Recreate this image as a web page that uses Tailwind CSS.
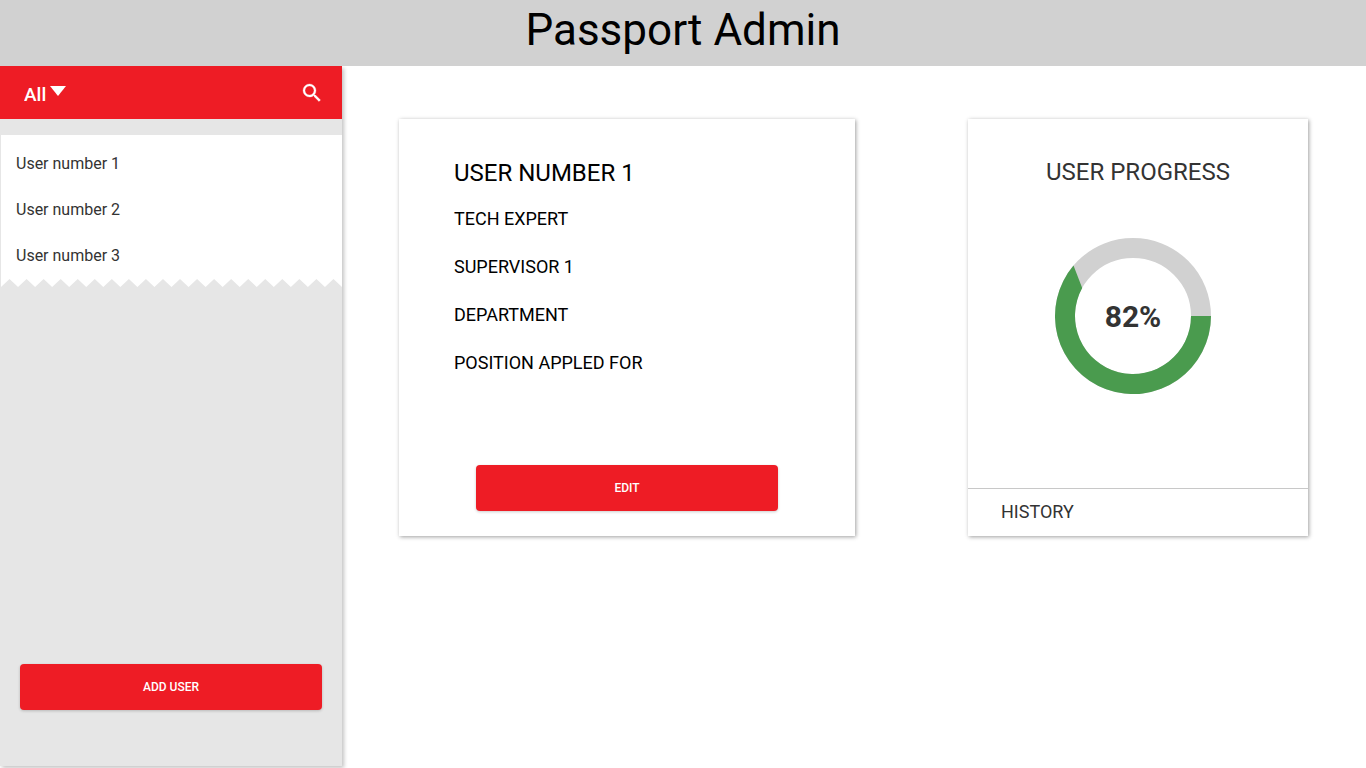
<!DOCTYPE html>
<html lang="en">
<head>
<meta charset="utf-8">
<meta name="viewport" content="width=device-width, initial-scale=1">
<title>Passport Admin</title>
<script src="https://cdn.jsdelivr.net/npm/@tailwindcss/browser@4"></script>
</head>
<body class="flex min-h-screen flex-col bg-white font-['Roboto',sans-serif] text-[#333333]">
  <header class="relative z-10 bg-[#d1d1d1] pt-1 pb-2.5 text-center text-black">
    <h1 class="text-[44px] leading-[52px]">Passport Admin</h1>
  </header>
  <div class="flex flex-1">
    <aside class="mb-0.5 flex w-[342px] shrink-0 flex-col bg-[#e6e6e6] shadow-[2px_2px_4px_rgba(0,0,0,0.24)]">
      <div class="flex h-[53px] items-center justify-between bg-[#ee1c25] pr-[18px] pl-6 text-white">
        <div class="relative">
          <select aria-label="Filter users" class="field-sizing-content block cursor-pointer appearance-none bg-transparent pt-1 pr-5 text-[19px] leading-6 font-medium">
            <option class="text-black">All</option>
          </select>
          <svg class="pointer-events-none absolute top-[7px] right-0 h-[10px] w-4" viewBox="0 0 16 10" fill="currentColor" aria-hidden="true"><path d="M0 0h16L8 10z"/></svg>
        </div>
        <button type="button" aria-label="Search" class="cursor-pointer">
          <svg class="size-6" viewBox="0 0 24 24" fill="currentColor" stroke="currentColor" stroke-width="0.3" aria-hidden="true"><path d="M15.5 14h-.79l-.28-.27A6.47 6.47 0 0 0 16 9.500 6.500 6.500 0 1 0 9.500 16c1.610 0 3.090-.59 4.230-1.570l.27.28v.79l5 4.990L20.490 19l-4.990-5zm-6 0C7.010 14 5 11.990 5 9.500S7.010 5 9.500 5 14 7.010 14 9.500 11.990 14 9.500 14z"/></svg>
        </button>
      </div>
      <nav aria-label="Users" class="mt-4 ml-px">
        <ul class="bg-white pt-[6px] text-base">
          <li><a href="#user-1" class="block px-[15px] py-[11px]">User number 1</a></li>
          <li><a href="#user-2" class="block px-[15px] py-[11px]">User number 2</a></li>
          <li><a href="#user-3" class="block px-[15px] py-[11px]">User number 3</a></li>
        </ul>
        <svg class="block h-2 w-full" viewBox="0 0 340 8" preserveAspectRatio="none" fill="#ffffff" aria-hidden="true"><path d="M0 0V8L8.500 0L17 8L25.500 0L34 8L42.500 0L51 8L59.500 0L68 8L76.500 0L85 8L93.500 0L102 8L110.500 0L119 8L127.500 0L136 8L144.500 0L153 8L161.500 0L170 8L178.500 0L187 8L195.500 0L204 8L212.500 0L221 8L229.500 0L238 8L246.500 0L255 8L263.500 0L272 8L280.500 0L289 8L297.500 0L306 8L314.500 0L323 8L331.500 0L340 8V0Z"/></svg>
      </nav>
      <div class="mt-auto px-5 pb-14">
        <button type="button" class="h-[46px] w-full cursor-pointer rounded-[4px] bg-[#ee1c25] text-xs font-medium text-white shadow-[0_1px_3px_rgba(0,0,0,0.2)]">ADD USER</button>
      </div>
    </aside>
    <main class="grid flex-1 grid-cols-[456fr_340fr] items-start gap-[113px] pt-[53px] pr-[58px] pl-[57px]">
      <section class="flex min-h-[417px] flex-col bg-white pt-[38px] pb-[25px] text-black shadow-[1px_1px_4px_rgba(0,0,0,0.38)]">
        <h2 class="px-[55px] text-2xl leading-8">USER NUMBER 1</h2>
        <ul class="mt-[18px] flex flex-col gap-6 px-[55px] text-lg leading-6">
          <li>TECH EXPERT</li>
          <li>SUPERVISOR 1</li>
          <li>DEPARTMENT</li>
          <li>POSITION APPLED FOR</li>
        </ul>
        <button type="button" class="mx-[77px] mt-auto h-[46px] cursor-pointer rounded-[4px] bg-[#ee1c25] text-xs font-medium text-white shadow-[0_1px_3px_rgba(0,0,0,0.2)]">EDIT</button>
      </section>
      <section class="flex min-h-[417px] flex-col bg-white pt-[37px] shadow-[1px_1px_4px_rgba(0,0,0,0.38)]">
        <h2 class="text-center text-2xl leading-8">USER PROGRESS</h2>
        <div class="mt-[50px] flex justify-center pr-[10px]">
          <div class="grid place-items-center">
            <svg class="col-start-1 row-start-1 size-[156px]" viewBox="0 0 156 156" aria-hidden="true">
              <circle cx="78" cy="78" r="68" fill="none" stroke="#d1d1d1" stroke-width="20"/>
              <path d="M156 78A78 78 0 1 1 18.500 27.600L27.200 50A58 58 0 1 0 136 78Z" fill="#4a9b4e"/>
            </svg>
            <p class="col-start-1 row-start-1 pt-0.5 text-3xl font-bold">82%</p>
          </div>
        </div>
        <a href="#history" class="mt-auto block border-t border-[#c8c8c8] px-[33px] pt-[11px] pb-3 text-lg leading-6">HISTORY</a>
      </section>
    </main>
  </div>
</body>
</html>
